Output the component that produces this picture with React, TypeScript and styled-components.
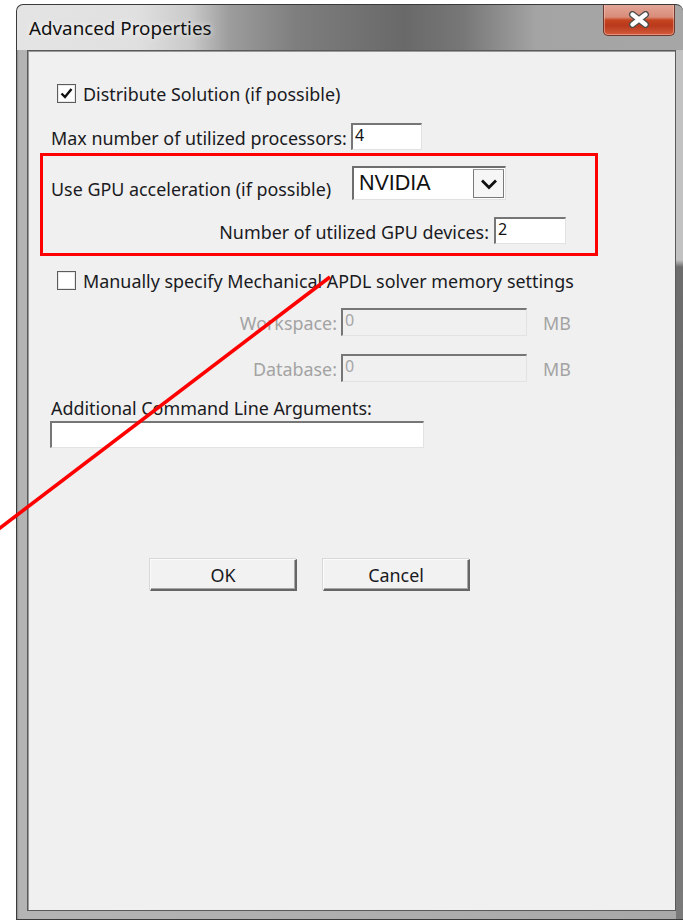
import React from "react";
import styled, { createGlobalStyle } from "styled-components";

const GlobalStyle = createGlobalStyle`
  html, body {
    margin: 0;
    padding: 0;
    background: #ffffff;
  }
  body {
    width: 683px;
    height: 920px;
    overflow: hidden;
    font-family: "Noto Sans", "Liberation Sans", sans-serif;
  }
  * { box-sizing: border-box; }
`;

const Desktop = styled.div`
  position: relative;
  width: 683px;
  height: 920px;
  padding: 4px 0 0 16px;
`;

const Window = styled.div`
  width: 667px;
  height: 916px;
  display: flex;
  flex-direction: column;
  border: 1px solid #3a3a3a;
  border-right: none;
  border-radius: 7px 7px 0 0;
  overflow: hidden;
  background:
    linear-gradient(
        90deg,
        #e4e4e4 0%,
        #e0e0e0 18%,
        #cacaca 26%,
        #9c9c9c 32%,
        #7e7e7e 42%,
        #696969 58%,
        #777777 67%,
        #a4a4a4 78%,
        #a6a6a6 100%
      )
      top / 100% 45px no-repeat,
    linear-gradient(180deg, #c2c2c2 0, #c2c2c2 255px, #6c6c6c 262px, #7a7a7a 100%)
      right / 7px 100% no-repeat,
    linear-gradient(90deg, #8e8e8e 0, #b4b4b4 2px, #a8a8a8 100%);
`;

const TitleBar = styled.div`
  height: 45px;
  flex: none;
  display: flex;
  align-items: flex-start;
  justify-content: space-between;
`;

const Title = styled.span`
  padding: 10px 0 0 12px;
  font-size: 18.8px;
  line-height: 26px;
  color: #111111;
  text-shadow: 0 0 6px rgba(255, 255, 255, 0.9);
`;

const CloseButton = styled.div`
  width: 72px;
  height: 32px;
  margin: -1px 8px 0 0;
  display: flex;
  align-items: center;
  justify-content: center;
  border: 1px solid #6e3a30;
  border-top: none;
  border-radius: 0 0 5px 5px;
  background: linear-gradient(
    180deg,
    #e3a899 0%,
    #d98c79 42%,
    #c5441f 52%,
    #b9391c 70%,
    #d35c3c 100%
  );
  box-shadow: inset 0 0 0 1px rgba(255, 210, 200, 0.45);
`;

const Client = styled.div`
  flex: 1;
  margin: 0 7px 8px 10px;
  border: 1px solid #5a5a5a;
  box-shadow: inset 1px 1px 0 #9a9a9a;
  background: #f0f0f0;
  padding: 0 0 0 12px;
  display: flex;
  flex-direction: column;
  align-items: flex-start;
  color: #1a1a22;
  font-size: 17.9px;
`;

const Row = styled.div<{ $top: number; $height: number; $indent?: number }>`
  margin-top: ${(p) => p.$top}px;
  height: ${(p) => p.$height}px;
  padding-left: ${(p) => p.$indent ?? 11}px;
  display: flex;
  align-items: center;
  white-space: nowrap;
`;

const Label = styled.span<{ $width?: number; $right?: boolean; $disabled?: boolean }>`
  display: inline-block;
  width: ${(p) => (p.$width ? `${p.$width}px` : "auto")};
  text-align: ${(p) => (p.$right ? "right" : "left")};
  color: ${(p) => (p.$disabled ? "#a3a3a3" : "#1a1a22")};
  line-height: 22px;
  padding-top: 2px;
`;

const Box = styled.span<{ $checked?: boolean }>`
  width: 19px;
  height: 19px;
  margin-right: 7px;
  display: inline-flex;
  align-items: center;
  justify-content: center;
  border: 1px solid #5c5c5c;
  background: #ffffff;
  box-shadow: inset 0 0 0 1px #e8e8e8;
`;

const Field = styled.div<{ $width: number; $height: number; $disabled?: boolean; $gap?: number }>`
  width: ${(p) => p.$width}px;
  height: ${(p) => p.$height}px;
  margin-left: ${(p) => p.$gap ?? 0}px;
  border-style: solid;
  border-width: 2px 1px 1px 2px;
  border-color: #767676 #e2e2e2 #e2e2e2 #767676;
  background: ${(p) => (p.$disabled ? "#f0f0f0" : "#ffffff")};
  color: ${(p) => (p.$disabled ? "#a6a6a6" : "#111111")};
  font-size: 16px;
  line-height: 18px;
  padding: 1px 0 0 2px;
`;

const GpuGroup = styled.div`
  margin-top: 3px;
  width: 558px;
  height: 103px;
  border: 3px solid #ff0000;
  padding: 10px 29px 0 8px;
  display: flex;
  flex-direction: column;
`;

const GroupRow = styled.div<{ $top: number; $height: number; $end?: boolean }>`
  margin-top: ${(p) => p.$top}px;
  height: ${(p) => p.$height}px;
  display: flex;
  align-items: ${(p) => (p.$end ? "center" : "flex-end")};
  justify-content: ${(p) => (p.$end ? "flex-end" : "flex-start")};
  white-space: nowrap;
`;

const Select = styled.div`
  width: 154px;
  height: 34px;
  display: flex;
  align-items: stretch;
  border-style: solid;
  border-width: 2px 1px 1px 2px;
  border-color: #6e6e6e #e0e0e0 #e0e0e0 #6e6e6e;
  background: #ffffff;
`;

const SelectValue = styled.span`
  flex: 1;
  padding: 0 0 0 5px;
  font-family: "Liberation Sans", Arial, sans-serif;
  font-size: 21.5px;
  line-height: 30px;
  color: #111111;
`;

const SelectArrow = styled.span`
  width: 31px;
  margin: 1px 1px 1px 0;
  display: flex;
  align-items: center;
  justify-content: center;
  border: 1px solid #7a7a7a;
  border-top-color: #9a9a9a;
  background: #f6f6f6;
`;

const Unit = styled.span`
  margin-left: 16px;
  color: #a3a3a3;
  line-height: 22px;
  padding-top: 2px;
`;

const ButtonRow = styled.div`
  margin-top: 111px;
  padding-left: 110px;
  display: flex;
  gap: 26px;
`;

const Button = styled.div`
  width: 147px;
  height: 32px;
  display: flex;
  align-items: center;
  justify-content: center;
  border-style: solid;
  border-width: 1px 2px 2px 1px;
  border-color: #fbfbfb #666666 #666666 #fbfbfb;
  box-shadow: -1px -1px 0 #d8d8d8, inset -1px -1px 0 #a8a8a8;
  background: #f2f2f2;
  color: #1a1a22;
  font-size: 17.9px;
`;

const Annotation = styled.svg`
  position: absolute;
  left: 0;
  top: 0;
  pointer-events: none;
`;

const CloseGlyph = () => (
  <svg width="22" height="17" viewBox="0 0 22 17">
    <path d="M4.5 3.5 L17.5 13.5 M17.5 3.5 L4.5 13.5" stroke="#4e4e4e" strokeWidth="7" strokeLinecap="round" />
    <path d="M4.5 3.5 L17.5 13.5 M17.5 3.5 L4.5 13.5" stroke="#ffffff" strokeWidth="4.4" strokeLinecap="round" />
  </svg>
);

const Check = () => (
  <svg width="15" height="15" viewBox="0 0 15 15">
    <path d="M2.5 7.5 L6 11 L12.5 3" fill="none" stroke="#111111" strokeWidth="2.4" />
  </svg>
);

const Chevron = () => (
  <svg width="18" height="12" viewBox="0 0 18 12">
    <path d="M2 2.5 L9 9.5 L16 2.5" fill="none" stroke="#111111" strokeWidth="2.8" />
  </svg>
);

export default function App() {
  return (
    <>
      <GlobalStyle />
      <Desktop>
        <Window>
          <TitleBar>
            <Title>Advanced Properties</Title>
            <CloseButton>
              <CloseGlyph />
            </CloseButton>
          </TitleBar>
          <Client>
            <Row $top={30} $height={24} $indent={17}>
              <Box $checked>
                <Check />
              </Box>
              <Label>Distribute Solution (if possible)</Label>
            </Row>

            <Row $top={18} $height={27}>
              <Label $width={294}>Max number of utilized processors:</Label>
              <Field $width={71} $height={27} $gap={6}>
                4
              </Field>
            </Row>

            <GpuGroup>
              <GroupRow $top={0} $height={34}>
                <Label $width={301}>Use GPU acceleration (if possible)</Label>
                <Select>
                  <SelectValue>NVIDIA</SelectValue>
                  <SelectArrow>
                    <Chevron />
                  </SelectArrow>
                </Select>
              </GroupRow>
              <GroupRow $top={17} $height={27} $end>
                <Label>Number of utilized GPU devices:</Label>
                <Field $width={72} $height={27} $gap={5}>
                  2
                </Field>
              </GroupRow>
            </GpuGroup>

            <Row $top={12} $height={24} $indent={17}>
              <Box />
              <Label>Manually specify Mechanical APDL solver memory settings</Label>
            </Row>

            <Row $top={16} $height={28}>
              <Label $width={286} $right $disabled>
                Workspace:
              </Label>
              <Field $width={186} $height={28} $gap={4} $disabled>
                0
              </Field>
              <Unit>MB</Unit>
            </Row>

            <Row $top={18} $height={28}>
              <Label $width={286} $right $disabled>
                Database:
              </Label>
              <Field $width={186} $height={28} $gap={4} $disabled>
                0
              </Field>
              <Unit>MB</Unit>
            </Row>

            <Row $top={14} $height={22}>
              <Label>Additional Command Line Arguments:</Label>
            </Row>

            <Row $top={3} $height={27} $indent={10}>
              <Field $width={374} $height={27} />
            </Row>

            <ButtonRow>
              <Button>OK</Button>
              <Button>Cancel</Button>
            </ButtonRow>
          </Client>
        </Window>
        <Annotation width="683" height="920" viewBox="0 0 683 920">
          <line x1="-2" y1="529.5" x2="330" y2="277" stroke="#ff0000" strokeWidth="3.6" />
        </Annotation>
      </Desktop>
    </>
  );
}
